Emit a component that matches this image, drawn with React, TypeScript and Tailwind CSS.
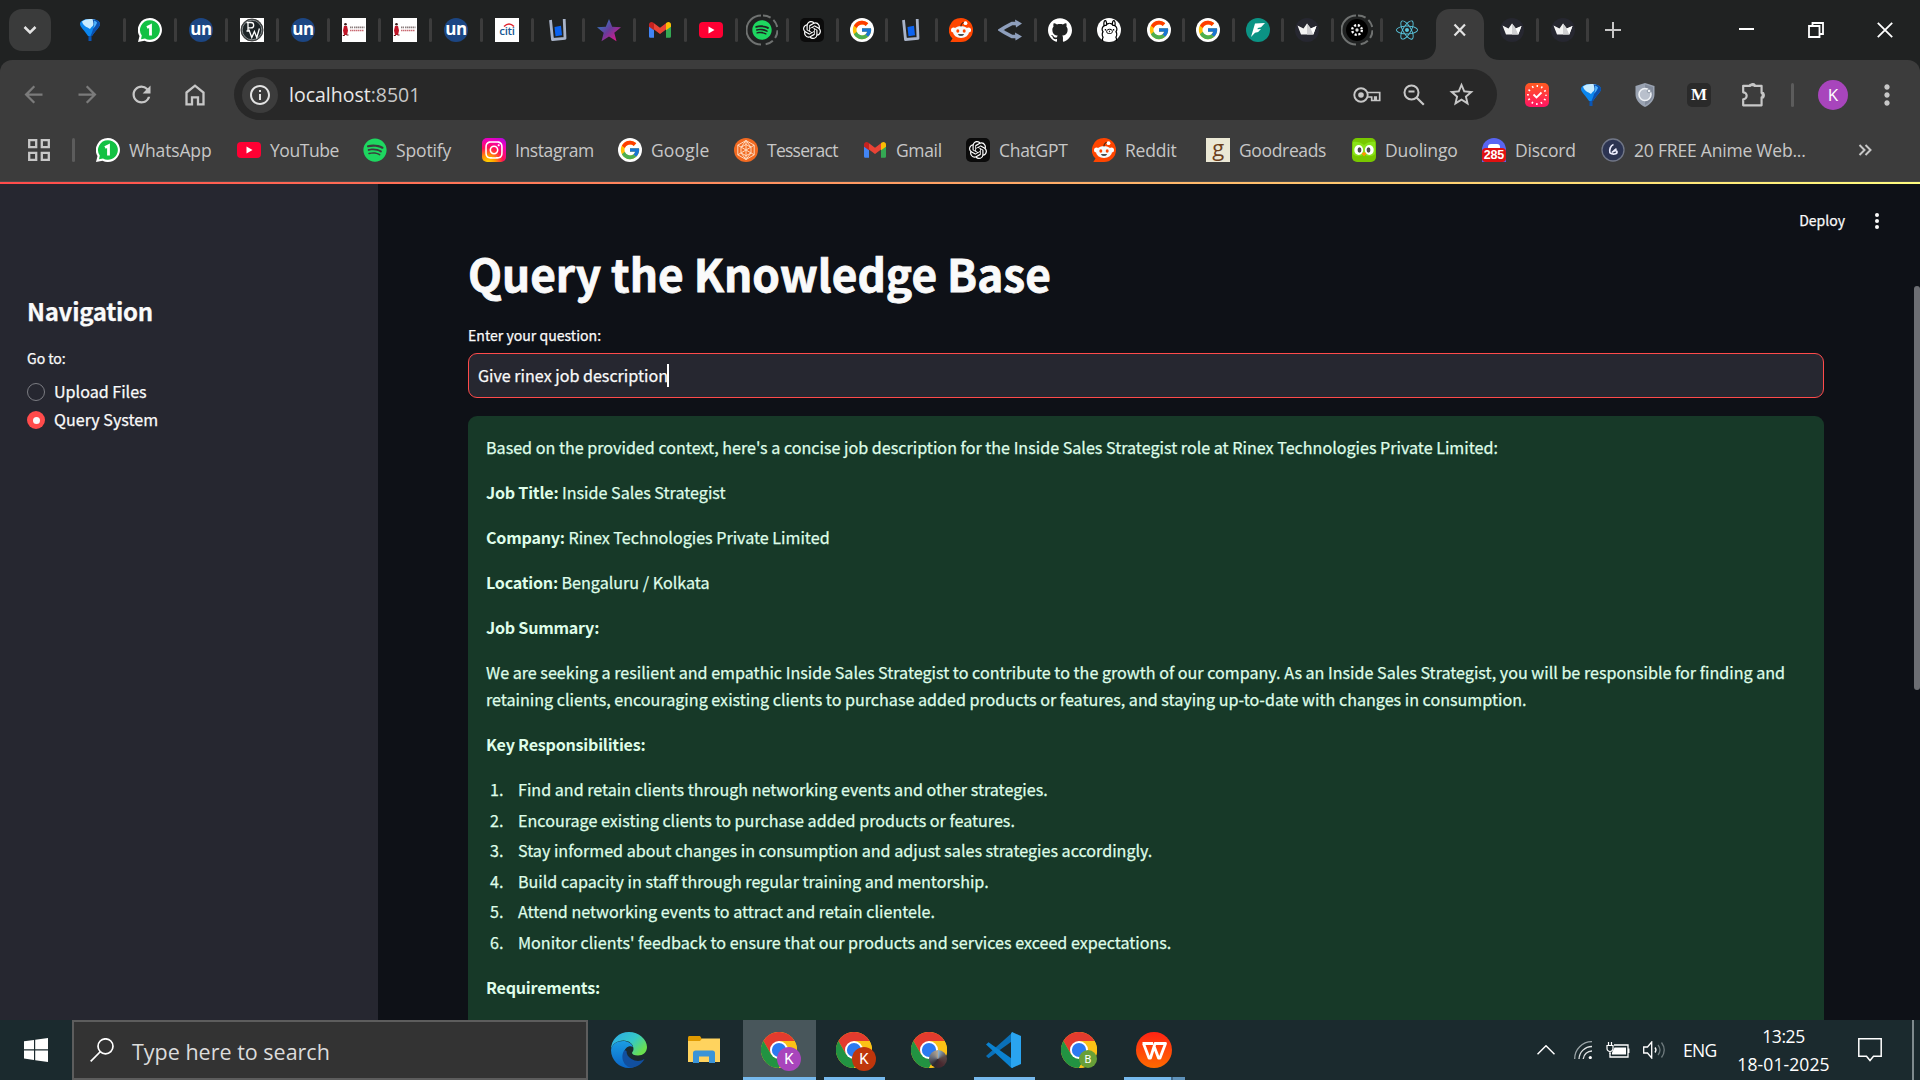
import type { ReactNode } from "react";
import { FaSpotify, FaReact, FaInstagram } from "react-icons/fa";
import { FcGoogle } from "react-icons/fc";
import { SiOpenai, SiGithub, SiOllama } from "react-icons/si";
import {
  MdArrowBack,
  MdArrowForward,
  MdRefresh,
  MdInfoOutline,
  MdStarOutline,
  MdMoreVert,
} from "react-icons/md";

/* ---------- favicons ---------- */

const Balloon = () => (
  <svg viewBox="0 0 24 24" className="size-6">
    <path d="M2 6C2 3 6 1 12 1s10 2 10 5c0 3-5 7-8 12h-4C7 13 2 9 2 6z" fill="#0b86ee" />
    <path d="M4 3.500C6 1.800 9 1 12 1s4 .300 6 1.200C17 7 14 8 12 11 9 9 5 8 4 3.500z" fill="#c8ecff" />
    <path d="M14.500 1.300c4 .500 7.500 2.200 7.500 4.700 0 3-5 7-8 12h-1.500c3-6 4-11 2-16.700z" fill="#0b4fae" />
    <path d="M16 2.500c1.500.600 2.500 1.200 3 2.200-1 3-3 5-4 6 1-3 1.500-5.500 1-8.200z" fill="#4db4ff" />
    <path d="M10.500 18h3v5h-3z" fill="#0a55b4" />
  </svg>
);

const WhatsAppBadge = () => (
  <svg viewBox="0 0 24 24" className="size-6">
    <path d="M12 0a12 12 0 1 1-5.500 22.700L0 24l1.500-6A12 12 0 0 1 12 0z" fill="#fff" />
    <path d="M12 2.200a9.800 9.800 0 1 1-5 18.200L3 21.200l.8-3.600A9.800 9.800 0 0 1 12 2.200z" fill="#12c143" />
    <path d="M9 9.400l3.500-1.700V17.500" fill="none" stroke="#fff" strokeWidth="2.800" />
  </svg>
);

const Un = () => (
  <div className="flex size-6 items-center justify-center rounded-full bg-[#1c4683] pb-1 font-['Open_Sans',sans-serif] text-[17px] leading-none font-bold tracking-[-0.5px] text-white">
    un
  </div>
);

const Pw = () => (
  <div className="flex size-6 items-center justify-center bg-white">
    <svg viewBox="0 0 24 24" className="size-6">
      <circle cx="12" cy="12" r="11" fill="#1d2427" stroke="#444" />
      <circle cx="12" cy="12" r="9.800" fill="none" stroke="#cfd3d4" strokeWidth=".6" />
      <path d="M6.500 4.500H11a2.700 2.700 0 0 1 0 5.400H8.300M8 4.500V13M6.500 13h3.200" fill="none" stroke="#fff" strokeWidth="1.300" />
      <path d="M8.800 11.500l3 8 2.600-6 2.400 6 2.600-9" fill="none" stroke="#fff" strokeWidth="1.300" />
    </svg>
  </div>
);

const Cap = () => (
  <div className="size-6 bg-white">
    <svg viewBox="0 0 24 24" className="size-6">
      <circle cx="3.500" cy="6.300" r="1.300" fill="#3b1d1d" />
      <path d="M2 8h3l1 4.500-1 4.500H2L1 12.500z" fill="#c01527" />
      <path d="M.8 17.500h2M4.500 17h2" stroke="#5a1010" />
      <path d="M8 9.300h3M12 9.300h10.500" stroke="#8b7d7d" strokeWidth="1.700" strokeDasharray="1.500 .5" />
      <path d="M8 12.500h14" stroke="#c96a72" strokeWidth="1.400" strokeDasharray="1.500 .5" />
    </svg>
  </div>
);

const Citi = () => (
  <div className="relative flex size-6 items-center justify-center bg-white pt-0.5 font-['Open_Sans',sans-serif] text-[11.500px] leading-none font-semibold tracking-[-0.3px] text-[#1a5a94]">
    citi
    <svg viewBox="0 0 24 24" className="absolute inset-0 size-6">
      <path d="M9 8.500Q14 3.500 19 8.500" fill="none" stroke="#e0252f" strokeWidth="1.500" />
    </svg>
  </div>
);

const Cup = () => (
  <svg viewBox="0 0 24 24" className="size-6">
    <path d="M4.500 2l2 19.500L19 20.300 18.200 1" fill="none" stroke="#a9b4c9" strokeWidth="2.800" strokeLinejoin="round" />
    <path d="M8.500 9l6.500-1.200 1 9.500-6.500 1z" fill="#0b63f0" />
  </svg>
);

const Star = () => (
  <svg viewBox="0 0 24 24" className="size-6">
    <defs>
      <linearGradient id="starFill" x1="0" y1="0" x2="1" y2="1">
        <stop offset="0.100" stopColor="#2f7fc5" />
        <stop offset=".5" stopColor="#6a3a9a" />
        <stop offset=".9" stopColor="#e0178c" />
      </linearGradient>
    </defs>
    <path d="M12 1l3.200 7.800L24 9.300l-6.700 5.400 2.200 8.500L12 18.600 4.500 23.200l2.200-8.500L0 9.300l8.800-.5z" fill="url(#starFill)" />
  </svg>
);

const Gmail = () => (
  <svg viewBox="0 0 24 24" className="size-6">
    <path d="M1 6v12.200c0 .9.700 1.600 1.600 1.600H6V10z" fill="#4285f4" />
    <path d="M23 6v12.200c0 .9-.7 1.600-1.600 1.600H18V10z" fill="#34a853" />
    <path d="M6 5.200l6 4.600 6-4.600v6.200l-6 4.600-6-4.600z" fill="#ea4335" />
    <path d="M1 6.500v2.200l5 3.600V5.200l-.8-.6C3.400 3.300 1 4.500 1 6.500z" fill="#c5221f" />
    <path d="M23 6.500v2.200l-5 3.600V5.200l.8-.6C20.600 3.300 23 4.500 23 6.500z" fill="#fbbc04" />
  </svg>
);

const YouTube = () => (
  <svg viewBox="0 0 24 24" className="size-6">
    <rect y="4" width="24" height="16" rx="4" fill="#ff0033" />
    <path d="M9.500 8.600l6 3.400-6 3.400z" fill="#fff" />
  </svg>
);

const Ringed = ({ children }: { children: ReactNode }) => (
  <div className="relative flex size-6 items-center justify-center">
    <svg viewBox="0 0 32 32" className="absolute -inset-1 size-8">
      <path d="M15 1.500A14.500 14.500 0 0 0 15 30.500" fill="none" stroke="#6f7271" strokeWidth="2" />
      <path d="M17 1.500A14.500 14.500 0 0 1 17 30.500" fill="none" stroke="#6f7271" strokeWidth="2" strokeDasharray="8 3.500" />
    </svg>
    {children}
  </div>
);

const Spotify = () => <FaSpotify className="size-6 text-[#1ed760]" />;

const SpotifyTab = () => (
  <Ringed>
    <FaSpotify className="size-5 text-[#1ed760]" />
  </Ringed>
);

const ChatGpt = () => (
  <div className="flex size-6 items-center justify-center rounded-[5px] bg-[#0b0b0b]">
    <SiOpenai className="size-[18px] text-white" />
  </div>
);

const Google = () => (
  <div className="flex size-6 items-center justify-center rounded-full bg-white">
    <FcGoogle className="size-[22px]" />
  </div>
);

const Reddit = () => (
  <svg viewBox="0 0 24 24" className="size-6">
    <path d="M12 0a12 12 0 1 1 0 24H1.300l2.200-3.500A12 12 0 0 1 12 0z" fill="#ff4500" />
    <circle cx="4.500" cy="12" r="2.500" fill="#fff" />
    <circle cx="19.500" cy="12" r="2.500" fill="#fff" />
    <ellipse cx="12" cy="14" rx="8" ry="6" fill="#f4f9fc" />
    <path d="M12 8.500c0-3 1.500-4.500 4-3.500" fill="none" stroke="#0b1416" strokeWidth="1" />
    <circle cx="16.500" cy="5.200" r="1.900" fill="#fff" />
    <ellipse cx="8.800" cy="13" rx="1.500" ry="1.800" fill="#ff4500" />
    <ellipse cx="15.200" cy="13" rx="1.500" ry="1.800" fill="#ff4500" />
    <path d="M8.800 16.200h6.400a3.400 2.400 0 0 1-6.400 0z" fill="#0b1416" />
  </svg>
);

const Fork = () => (
  <svg viewBox="0 0 24 24" className="size-6">
    <path d="M18 5.500h-4L6.500 9.500 2.500 12l4 2.500L14 18.500h4" fill="none" stroke="#8e9fbc" strokeWidth="3.600" />
    <path d="M17 1.500L24 5.500l-6 4zM17 14.500l7 4-6.500 4z" fill="#8e9fbc" />
  </svg>
);

const Github = () => <SiGithub className="size-6 text-white" />;

const Ollama = () => (
  <div className="flex size-6 items-center justify-center rounded-full bg-white">
    <SiOllama className="size-[21px] text-black" />
  </div>
);

const Feather = () => (
  <div className="size-6 rounded-full bg-[#0b9384]">
    <svg viewBox="0 0 24 24" className="size-6">
      <path d="M9 5.500L19 5l-4 4.200-3.200.8-.3 1.300 3.500-.3-2.800 3-3.200.8L5 19z" fill="#fff" />
    </svg>
  </div>
);

const Crown = () => (
  <div className="size-6 rounded-full bg-[#262730]">
    <svg viewBox="0 0 24 24" className="size-6">
      <path d="M2.500 7.500l6 3L12 5.500l3.800 5L21.500 8l-3.200 8.500H6z" fill="#f4f4f4" />
      <path d="M12 5.500l3.800 5 2.500 6H12z" fill="#cfcfd2" />
      <path d="M15.800 10.500L21.500 8l-3.200 8.500z" fill="#fff" />
    </svg>
  </div>
);

const Cluster = () => (
  <Ringed>
    <div className="flex size-[22px] items-center justify-center rounded-full bg-black">
      <svg viewBox="0 0 24 24" className="size-5">
        <circle cx="12" cy="12" r="5.800" fill="none" stroke="#fff" strokeWidth="2.800" strokeDasharray="2.600 2" />
        <circle cx="12" cy="12" r="2" fill="#ddd" />
      </svg>
    </div>
  </Ringed>
);

const ReactLogo = () => <FaReact className="size-[22px] text-[#58c4dc]" />;

const Instagram = () => (
  <div className="flex size-6 items-center justify-center rounded-[5px] bg-[radial-gradient(circle_at_25%_105%,#ffdd00_0%,#ff9500_25%,#ff1055_50%,#f400b8_75%,#7b10ff_110%)]">
    <FaInstagram className="size-5 text-white" />
  </div>
);

const Tesseract = () => (
  <svg viewBox="0 0 24 24" className="size-6">
    <circle cx="12" cy="12" r="12" fill="#f26a21" />
    <g fill="none" stroke="#ffd9bd" strokeWidth="1">
      <path d="M12 2.500l8.200 4.700v9.600L12 21.500l-8.200-4.700V7.200z" />
      <path d="M12 6.500l5 2.800v5.600l-5 2.800-5-2.800V9.300z" />
      <path d="M12 2.500v19M3.800 7.200l16.400 9.600M20.200 7.200L3.800 16.800M7 9.300L12 2.500l5 6.800M7 14.900l5 6.600 5-6.600" />
    </g>
  </svg>
);

const Goodreads = () => (
  <div className="flex size-6 items-center justify-center bg-[#ebe8d5] pb-1.5 font-['Open_Sans',sans-serif] text-[22px] leading-none text-[#6b3f1d]">
    g
  </div>
);

const Duolingo = () => (
  <svg viewBox="0 0 24 24" className="size-6">
    <rect width="24" height="24" rx="5" fill="#78c800" />
    <path d="M1 4c3-1 8 0 11 3 3-3 8-4 11-3v12c-3 3-8 3-11 0-3 3-8 3-11 0z" fill="#89e219" />
    <ellipse cx="6.700" cy="12" rx="4.400" ry="5" fill="#fff" />
    <ellipse cx="17.300" cy="12" rx="4.400" ry="5" fill="#fff" />
    <ellipse cx="7.500" cy="12" rx="1.900" ry="2.700" fill="#4b4b4b" />
    <ellipse cx="16.500" cy="12" rx="1.900" ry="2.700" fill="#4b4b4b" />
    <path d="M9.500 15.500L12 14l2.500 1.500L12 18.500z" fill="#ff9600" />
  </svg>
);

const Discord = () => (
  <div className="flex size-6 flex-col items-center justify-end overflow-hidden rounded-full rounded-b-[5px] bg-[#5865f2]">
    <div className="h-1 w-3 rounded-t-[3px] bg-white" />
    <div className="flex h-3.5 w-6 items-center justify-center rounded-[4px] bg-[#e01010] font-['Liberation_Sans',sans-serif] text-[12.500px] leading-none font-bold text-white">
      285
    </div>
  </div>
);

const Anime = () => (
  <svg viewBox="0 0 24 24" className="size-6">
    <circle cx="12" cy="12" r="11" fill="#2c3452" stroke="#717787" strokeWidth="1.300" />
    <path d="M12.500 6.500c-3 1-4.500 5-3.500 8.500M9 15c2.500 1.500 7 1.500 7-1 0-2-3-1.500-5 .5 2-2 3-3 4.500-3.800" fill="none" stroke="#eef" strokeWidth="1.700" />
  </svg>
);

/* ---------- browser chrome ---------- */

const wideTabs = [Un, Pw, Un, Cap, Cap, Un, Citi, Cup, Star, Gmail, YouTube, SpotifyTab];
const narrowTabs = [ChatGpt, Google, Cup, Reddit, Fork, Github, Ollama, Google, Google, Feather, Crown, Cluster];

const Divider = () => <div className="h-6 w-[3px] shrink-0 rounded-sm bg-[#3c3c3c]" />;

function TabStrip() {
  return (
    <div className="flex h-[60px] items-center bg-[#202222]">
      <div className="ml-[9px] flex size-[42px] items-center justify-center rounded-[13px] bg-[#3a3b3b]">
        <svg viewBox="0 0 14 10" className="h-[10px] w-[14px]">
          <path d="M1.500 2L7 7.500 12.500 2" fill="none" stroke="#e3e3e3" strokeWidth="2.500" />
        </svg>
      </div>
      <div className="ml-[6px] flex w-[66px] justify-center">
        <Balloon />
      </div>
      <Divider />
      <div className="flex w-12 justify-center">
        <WhatsAppBadge />
      </div>
      <Divider />
      {wideTabs.map((Icon, i) => (
        <div key={i} className="flex shrink-0 items-center">
          <div className="flex w-12 justify-center">
            <Icon />
          </div>
          <Divider />
        </div>
      ))}
      {narrowTabs.map((Icon, i) => (
        <div key={i} className="flex shrink-0 items-center">
          <div className="flex w-[46.500px] justify-center">
            <Icon />
          </div>
          <Divider />
        </div>
      ))}
      <div className="flex w-[48px] justify-center">
        <ReactLogo />
      </div>
      <div className="-ml-[11px] flex h-[60px] items-end">
        <svg viewBox="0 0 80 51" className="h-[51px] w-[80px]">
          <path d="M0 51C10 51 16 45 16 36V14C16 6 22 0 30 0H50C58 0 64 6 64 14V36C64 45 70 51 80 51z" fill="#3c3c3c" />
          <path d="M34.500 15.500l10.500 11M45 15.500l-10.500 11" stroke="#e3e3e3" strokeWidth="2.200" />
        </svg>
      </div>
      <div className="-ml-[12px] flex w-[48px] justify-center">
        <Crown />
      </div>
      <Divider />
      <div className="flex w-[47px] justify-center">
        <Crown />
      </div>
      <Divider />
      <svg viewBox="0 0 16 16" className="ml-4 size-4">
        <path d="M8 0v16M0 8h16" stroke="#c7c7c7" strokeWidth="2" />
      </svg>
      <div className="ml-auto flex items-center text-white">
        <div className="flex w-[70px] justify-center pb-0.5">
          <div className="h-0.5 w-[15px] bg-white" />
        </div>
        <div className="flex w-[69px] justify-center">
          <svg viewBox="0 0 16 16" className="size-4">
            <path d="M1 4h10.500v11H1zM4.500 4V1H15v11h-3.500" fill="none" stroke="#fff" strokeWidth="1.800" />
          </svg>
        </div>
        <div className="flex w-[70px] justify-center">
          <svg viewBox="0 0 16 16" className="size-4">
            <path d="M.8.8l14.400 14.400M15.200.8L.8 15.200" stroke="#fff" strokeWidth="1.800" />
          </svg>
        </div>
      </div>
    </div>
  );
}

function Toolbar() {
  return (
    <div className="bg-[#202222]">
      <div className="flex h-[69px] items-center rounded-t-[12px] bg-[#3c3c3c]">
        <div className="flex items-center pl-[6px] text-[#c7c7c7]">
          <div className="flex w-[54px] justify-center text-[#7b7b7b]">
            <MdArrowBack className="size-[27px]" />
          </div>
          <div className="flex w-[54px] justify-center text-[#7b7b7b]">
            <MdArrowForward className="size-[27px]" />
          </div>
          <div className="flex w-[54px] justify-center">
            <MdRefresh className="size-[27px]" />
          </div>
          <div className="flex w-[54px] justify-center">
            <svg viewBox="0 0 20 22" className="h-[22px] w-5">
              <path d="M1.500 8.500L10 1.700l8.500 6.800v11.800h-5.500v-7H7v7H1.500z" fill="none" stroke="#c7c7c7" strokeWidth="2.300" />
            </svg>
          </div>
        </div>
        <div className="ml-[12px] flex h-[51px] w-[1263px] items-center rounded-full bg-[#282828] pl-2">
          <div className="flex size-9 items-center justify-center rounded-full bg-[#3c3c3c]">
            <MdInfoOutline className="size-6 text-[#e3e3e3]" />
          </div>
          <div className="ml-[11px] font-['Open_Sans',sans-serif] text-[19.500px] leading-6 text-[#e8e8e8]">
            localhost<span className="text-[#c7c7c7]">:8501</span>
          </div>
          <div className="ml-auto flex items-center pr-[21px]">
            <svg viewBox="0 0 28 16" className="h-4 w-7">
              <circle cx="8" cy="8" r="6.700" fill="none" stroke="#c7c7c7" strokeWidth="1.900" />
              <circle cx="8" cy="8" r="2.800" fill="#c7c7c7" />
              <path d="M14 5.500h12.700v8h-3.500V10h-1.500v3.500h-3V10H14" fill="none" stroke="#c7c7c7" strokeWidth="1.700" />
            </svg>
            <svg viewBox="0 0 22 22" className="ml-[22px] size-[22px]">
              <circle cx="8.500" cy="8.500" r="7" fill="none" stroke="#c7c7c7" strokeWidth="2" />
              <path d="M13.500 13.500l7.300 7.300M5.500 7.500h6" stroke="#c7c7c7" strokeWidth="2.200" />
            </svg>
            <MdStarOutline className="ml-[22px] size-[29px] text-[#c7c7c7]" />
          </div>
        </div>
        <div className="flex items-center pl-[13px]">
          <div className="flex w-[54px] justify-center">
            <svg viewBox="0 0 24 24" className="size-6">
              <defs>
                <linearGradient id="clockFill" x1="0" y1="0" x2="0" y2="1">
                  <stop offset="0" stopColor="#ff5a1f" />
                  <stop offset="1" stopColor="#ff1464" />
                </linearGradient>
              </defs>
              <rect width="24" height="24" rx="5" fill="url(#clockFill)" />
              <circle cx="12" cy="12" r="9" fill="none" stroke="#fff" strokeWidth="2" strokeDasharray="1.500 3.212" strokeDashoffset=".7" />
              <path d="M8.500 11.500l3 3 5-5" fill="none" stroke="#fff" strokeWidth="1.800" />
            </svg>
          </div>
          <div className="flex w-[54px] justify-center">
            <Balloon />
          </div>
          <div className="flex w-[54px] justify-center">
            <svg viewBox="0 0 24 24" className="size-6">
              <path d="M12 0l9.500 3v8c0 6-4 10.500-9.500 13C6.500 21.500 2.500 17 2.500 11V3z" fill="#9aa3b2" />
              <path d="M12 1.500V22.300c4.500-2.300 8-6 8-11.300V4z" fill="#828b9b" />
              <circle cx="12" cy="11.500" r="6" fill="#b9c0cc" stroke="#eef1f5" strokeWidth="1.600" />
              <circle cx="16" cy="8" r="1.800" fill="#eef1f5" stroke="#828b9b" strokeWidth=".8" />
            </svg>
          </div>
          <div className="flex w-[54px] justify-center">
            <div className="flex size-6 items-center justify-center rounded-[5px] bg-[#2a2a2a] font-['Liberation_Serif',serif] text-[17px] leading-none font-bold text-white">
              M
            </div>
          </div>
          <div className="flex w-[56px] justify-center">
            <svg viewBox="0 0 24 24" className="size-[26px]">
              <path d="M2 3.500h6.500v-1h3.800v1H19v6.700h1.500v4H19v7.300H2v-5.500a3.200 3.200 0 0 0 0-6.500z" fill="none" stroke="#c7c7c7" strokeWidth="2" strokeLinejoin="round" />
              <path d="M9 3.500a2 2 0 0 1 4 0zM19.500 10.300a2 2 0 0 1 0 4z" fill="#c7c7c7" stroke="#c7c7c7" />
            </svg>
          </div>
          <div className="ml-[9px] h-6 w-[3px] rounded-sm bg-[#5c5c5c]" />
          <div className="ml-[24px] flex size-[30px] items-center justify-center rounded-full bg-[#a845bc] font-['Open_Sans',sans-serif] text-[17px] leading-none text-white">
            K
          </div>
          <MdMoreVert className="ml-[23px] size-[32px] text-[#c7c7c7]" />
        </div>
      </div>
    </div>
  );
}

function Bookmark({ icon, label, className }: { icon: ReactNode; label: string; className: string }) {
  return (
    <div className={`flex shrink-0 items-center gap-[9px] whitespace-nowrap ${className}`}>
      {icon}
      <span>{label}</span>
    </div>
  );
}

function BookmarkBar() {
  return (
    <div className="flex h-[53px] items-center border-b border-[#4a4a4a] bg-[#3c3c3c] pb-[10px] font-['Open_Sans',sans-serif] text-[17.500px] leading-6 text-[#c7c7c7]">
      <svg viewBox="0 0 22 22" className="ml-7 size-[22px]">
        <path d="M1.200 1.200h7v7h-7zM13.800 1.200h7v7h-7zM1.200 13.800h7v7h-7zM13.800 13.800h7v7h-7z" fill="none" stroke="#c7c7c7" strokeWidth="2.300" />
      </svg>
      <div className="mr-[21px] ml-[22px] h-6 w-[3px] rounded-sm bg-[#5c5c5c]" />
      <Bookmark icon={<WhatsAppBadge />} label="WhatsApp" className="w-[141px] tracking-[-0.15px]" />
      <Bookmark icon={<YouTube />} label="YouTube" className="w-[126px] tracking-[-0.45px]" />
      <Bookmark icon={<Spotify />} label="Spotify" className="w-[119px] tracking-[-0.15px]" />
      <Bookmark icon={<Instagram />} label="Instagram" className="w-[136px] tracking-[-0.4px]" />
      <Bookmark icon={<Google />} label="Google" className="w-[116px] tracking-[0.15px]" />
      <Bookmark icon={<Tesseract />} label="Tesseract" className="w-[129px] tracking-[-0.75px]" />
      <Bookmark icon={<Gmail />} label="Gmail" className="w-[103px] tracking-[-0.35px]" />
      <Bookmark icon={<ChatGpt />} label="ChatGPT" className="w-[126px] tracking-[-0.3px]" />
      <Bookmark icon={<Reddit />} label="Reddit" className="w-[114px] tracking-[-0.2px]" />
      <Bookmark icon={<Goodreads />} label="Goodreads" className="w-[146px] tracking-[-0.35px]" />
      <Bookmark icon={<Duolingo />} label="Duolingo" className="w-[130px] tracking-[-0.1px]" />
      <Bookmark icon={<Discord />} label="Discord" className="w-[119px] tracking-[-0.2px]" />
      <Bookmark icon={<Anime />} label="20 FREE Anime Web..." className="w-[257px] tracking-[-0.2px]" />
      <svg viewBox="0 0 14 12" className="h-3 w-[14px]">
        <path d="M1.500 1l5 5-5 5M7.500 1l5 5-5 5" fill="none" stroke="#c7c7c7" strokeWidth="2" />
      </svg>
    </div>
  );
}

/* ---------- page ---------- */

function Sidebar() {
  return (
    <aside className="w-[378px] shrink-0 bg-[#262730] px-[27px] pt-[111px]">
      <h2 className="text-[24px] leading-8 font-bold tracking-[-0.28px]">Navigation</h2>
      <div className="mt-[19px] text-[14px] leading-6">Go to:</div>
      <div className="mt-2 flex flex-col">
        <label className="flex h-7 items-center gap-[9px]">
          <span className="size-[18px] rounded-full border border-[#7b7c82]" />
          <span className="-mt-[3px] text-[16.100px] leading-6">Upload Files</span>
        </label>
        <label className="flex h-7 items-center gap-[9px]">
          <span className="flex size-[18px] items-center justify-center rounded-full bg-[#ff4b4b]">
            <span className="size-[7px] rounded-full bg-[#fafafa]" />
          </span>
          <span className="-mt-[3px] text-[16.100px] leading-6">Query System</span>
        </label>
      </div>
    </aside>
  );
}

const responsibilities = [
  "Find and retain clients through networking events and other strategies.",
  "Encourage existing clients to purchase added products or features.",
  "Stay informed about changes in consumption and adjust sales strategies accordingly.",
  "Build capacity in staff through regular training and mentorship.",
  "Attend networking events to attract and retain clientele.",
  "Monitor clients' feedback to ensure that our products and services exceed expectations.",
];

const B = ({ children }: { children: ReactNode }) => (
  <strong className="font-bold tracking-[-0.23px] [-webkit-text-stroke:0px]">{children}</strong>
);

function Main() {
  return (
    <main className="flex min-w-0 flex-1 flex-col bg-[#0e1117]">
      <div className="h-[59px] shrink-0">
        <div className="flex items-center justify-end pt-[26px] pr-[32px]">
          <span className="-mt-[2px] text-[14px] leading-6">Deploy</span>
          <svg viewBox="0 0 4 16" className="mr-[9px] ml-[30px] h-4 w-1">
            <circle cx="2" cy="2" r="2" fill="#fafafa" />
            <circle cx="2" cy="8" r="2" fill="#fafafa" />
            <circle cx="2" cy="14" r="2" fill="#fafafa" />
          </svg>
        </div>
      </div>
      <div className="flex min-h-0 flex-1">
        <div className="mr-[90px] ml-[90px] flex min-w-0 flex-1 flex-col">
          <h1 className="text-[44.200px] leading-[60px] font-bold [-webkit-text-stroke:0.8px_#fafafa]">
            Query the Knowledge Base
          </h1>
          <div className="mt-5 text-[14.100px] leading-6">Enter your question:</div>
          <div className="mt-[6px] flex h-[45px] shrink-0 items-center rounded-[9px] border border-[#ff4b4b] bg-[#262730] pl-[9px]">
            <span className="-mt-px text-[16.100px] leading-6">Give rinex job description</span>
            <span className="-ml-px h-[23px] w-0.5 bg-white" />
          </div>
          <div className="mt-[18px] flex min-h-0 flex-1 flex-col gap-[18px] overflow-hidden rounded-t-[9px] bg-[#173928] px-[18px] pt-[18px] text-[16.120px] leading-[27px] whitespace-nowrap text-[#dffde9]">
            <p>
              Based on the provided context, here's a concise job description for the Inside Sales Strategist role at
              Rinex Technologies Private Limited:
            </p>
            <p>
              <B>Job Title:</B> Inside Sales Strategist
            </p>
            <p>
              <B>Company:</B> Rinex Technologies Private Limited
            </p>
            <p>
              <B>Location:</B> Bengaluru / Kolkata
            </p>
            <p>
              <B>Job Summary:</B>
            </p>
            <p>
              We are seeking a resilient and empathic Inside Sales Strategist to contribute to the growth of our
              company. As an Inside Sales Strategist, you will be responsible for finding and
              <br />
              retaining clients, encouraging existing clients to purchase added products or features, and staying
              up-to-date with changes in consumption.
            </p>
            <p>
              <B>Key Responsibilities:</B>
            </p>
            <ol className="flex flex-col gap-[3.600px]">
              {responsibilities.map((text, i) => (
                <li key={text} className="flex">
                  <span className="w-8 shrink-0 pl-1">{i + 1}.</span>
                  {text}
                </li>
              ))}
            </ol>
            <p>
              <B>Requirements:</B>
            </p>
          </div>
        </div>
        <div className="w-[6px] shrink-0 pt-[43px]">
          <div className="h-[404px] rounded-full bg-[#6c6e73]" />
        </div>
      </div>
    </main>
  );
}

/* ---------- taskbar ---------- */

const ChromeLogo = () => (
  <svg viewBox="0 0 36 36" className="size-9">
    <circle cx="18" cy="18" r="18" fill="#fbc116" />
    <path d="M2.400 9A18 18 0 0 1 33.600 9H18l-7.800 13.500z" fill="#e33b2e" />
    <path d="M2.400 9A18 18 0 0 0 18 36l7.800-13.500H10.200z" fill="#229342" />
    <path d="M33.600 9A18 18 0 0 1 18 36l7.800-13.500A9 9 0 0 0 18 9z" fill="#fbc116" />
    <circle cx="18" cy="18" r="9" fill="#fff" />
    <circle cx="18" cy="18" r="7.100" fill="#2b7af0" />
  </svg>
);

const Edge = () => (
  <svg viewBox="0 0 36 36" className="size-9">
    <defs>
      <linearGradient id="edgeTop" x1="0" y1="0" x2="1" y2=".6">
        <stop offset="0" stopColor="#2ba8ea" />
        <stop offset=".6" stopColor="#35c8c8" />
        <stop offset="1" stopColor="#6ae04f" />
      </linearGradient>
      <linearGradient id="edgeLeft" x1="0" y1="0" x2="0" y2="1">
        <stop offset="0" stopColor="#1b9de2" />
        <stop offset="1" stopColor="#0b66c8" />
      </linearGradient>
    </defs>
    <path d="M0 18C0 7 8 0 18 0s18 7.500 18 15c0 5-4 8.500-9 8.500-4 0-6-1.500-6-2.500s1.500-1.500 1.500-4C22.500 12 18 8.500 12.500 8.500 6 8.500 1 12 0 18z" fill="url(#edgeTop)" />
    <path d="M0 18C1 12 6 9 12 9c5 0 9 2.500 10 6-3-2-9 0-9 7 0 8 7 13 15 9.500C25 34.500 21.500 36 18 36 8 36 0 28 0 18z" fill="url(#edgeLeft)" />
    <path d="M13.500 18c-5 7-.5 17 7 17.700C26 35 31 32 33.500 27c-4 2.500-9 2.500-13 0-3.500-2-5-5-5-8z" fill="#114f9e" />
  </svg>
);

const Explorer = () => (
  <svg viewBox="0 0 32 28" className="h-7 w-8">
    <path d="M0 1.500C0 .7.700 0 1.500 0H12l2 3v3H0z" fill="#e09a00" />
    <path d="M0 5h12l2-2.500h18V26H0z" fill="#ffd35e" />
    <path d="M5 27V17c0-1.500 1-2.500 2.500-2.500h17c1.500 0 2.500 1 2.500 2.500v10h-6v-6.500H11V27z" fill="#3a94d8" />
  </svg>
);

const VsCode = () => (
  <svg viewBox="0 0 36 36" className="size-9">
    <path d="M0 24l2.500 2.300L27 8.500V0L5 19.500z" fill="#0a70b8" />
    <path d="M2.500 10.200L27 27.500V36h-1.500L0 12.500z" fill="#0b82d0" />
    <path d="M26 0l9 4v28l-9 4-1-1.500V1.500z" fill="#2aa4f0" />
  </svg>
);

const Wps = () => (
  <svg viewBox="0 0 36 36" className="size-9">
    <defs>
      <linearGradient id="wpsFill" x1="0" y1="0" x2="0" y2="1">
        <stop offset="0" stopColor="#ff2314" />
        <stop offset="1" stopColor="#ff6a00" />
      </linearGradient>
    </defs>
    <circle cx="18" cy="18" r="18" fill="url(#wpsFill)" />
    <path d="M6.500 11.500h10.500M7.500 11.500l5.500 14.500h1.500l4.500-14.500h10.500l-5.500 14.500h-1.500l-4.500-12" fill="none" stroke="#fff" strokeWidth="2.800" strokeLinejoin="round" />
  </svg>
);

function TaskItem({ children, active, open }: { children: ReactNode; active?: boolean; open?: boolean }) {
  return (
    <div className="flex w-[75px] shrink-0 justify-center">
      <div className={`flex h-[60px] w-[73px] flex-col items-center ${active ? "bg-[#48565b]" : ""}`}>
        <div className="relative flex h-[57px] items-center pt-[3px]">{children}</div>
        <div className={`h-[3px] ${active ? "w-full" : "w-[61px]"} ${active || open ? "bg-[#76b9ed]" : ""}`} />
      </div>
    </div>
  );
}

function Badge({ label, className }: { label: string; className: string }) {
  return (
    <span
      className={`absolute flex items-center justify-center rounded-full font-['Roboto',sans-serif] leading-none text-white ${className}`}
    >
      {label}
    </span>
  );
}

function Taskbar() {
  return (
    <div className="flex h-[60px] shrink-0 items-center bg-[#1b2a2e] font-['Open_Sans',sans-serif] text-white">
      <div className="flex w-[72px] justify-center">
        <svg viewBox="0 0 24 24" className="size-6">
          <path d="M0 3.300L10 2v9.300H0zM11.200 1.800L24 0v11.300H11.200zM0 12.600h10v9.300L0 20.600zM11.200 12.600H24V24l-12.800-1.800z" fill="#fff" />
        </svg>
      </div>
      <div className="flex h-[60px] w-[516px] items-center border-2 border-[#5d5d5d] bg-[#333333] pl-4">
        <svg viewBox="0 0 24 24" className="size-6">
          <circle cx="15.500" cy="8.300" r="7.500" fill="none" stroke="#fff" strokeWidth="1.700" />
          <path d="M10.500 13.500L.7 23.300" stroke="#fff" strokeWidth="1.700" />
        </svg>
        <span className="mt-[3px] ml-[18px] text-[21.500px] leading-8 text-[#dcdcdc]">Type here to search</span>
      </div>
      <div className="ml-[3.500px] flex">
        <TaskItem>
          <Edge />
        </TaskItem>
        <TaskItem>
          <Explorer />
        </TaskItem>
        <TaskItem active>
          <ChromeLogo />
          <Badge label="K" className="top-[27px] left-[16px] size-6 bg-[#a845bc] text-[15px]" />
        </TaskItem>
        <TaskItem open>
          <ChromeLogo />
          <Badge label="K" className="top-[27px] left-[16px] size-6 bg-[#bf360c] text-[15px]" />
        </TaskItem>
        <TaskItem>
          <ChromeLogo />
          <Badge
            label=""
            className="top-[30px] left-[18px] size-[18px] bg-[conic-gradient(#8fb4cf,#5a4a48,#4a2a30,#2c2830,#6a6f7c,#b8a890)]"
          />
        </TaskItem>
        <TaskItem open>
          <VsCode />
        </TaskItem>
        <TaskItem>
          <ChromeLogo />
          <Badge label="B" className="top-[30px] left-[18px] size-[18px] bg-[#689f38] text-[11px]" />
        </TaskItem>
        <div className="flex w-[75px] flex-col items-center">
          <div className="flex h-[57px] items-center pt-[3px]">
            <Wps />
          </div>
          <div className="flex h-[3px] w-[61px]">
            <div className="w-[47px] bg-[#76b9ed]" />
            <div className="w-[2px] bg-[#42698a]" />
            <div className="flex-1 bg-[#5f92ba]" />
          </div>
        </div>
      </div>
      <div className="ml-auto flex h-[60px] items-center text-[17.500px] leading-7">
        <svg viewBox="0 0 18 10" className="mr-[19px] h-[10px] w-[18px]">
          <path d="M.5 9.300L9 .8l8.500 8.500" fill="none" stroke="#fff" strokeWidth="1.500" />
        </svg>
        <svg viewBox="0 0 18 18" className="mr-[14px] size-[18px]">
          <g fill="none" strokeWidth="1.300">
            <path d="M.7 18A17 17 0 0 1 18 .7" stroke="#9aa4a7" />
            <path d="M5 18A13 13 0 0 1 18 5.500" stroke="#e0e4e5" />
            <path d="M9.200 18A9 9 0 0 1 18 10" stroke="#e0e4e5" />
          </g>
          <circle cx="16.300" cy="16.500" r="1.600" fill="#fff" />
        </svg>
        <svg viewBox="0 0 24 16" className="mr-[13px] h-4 w-6">
          <path d="M8 3h14v12H4v-4M22.800 6.500v4.500" fill="none" stroke="#fff" strokeWidth="1.300" />
          <path d="M8.500 5.500H20v7H6v-2z" fill="#fff" />
          <path d="M1 3.500h6v3a3 3 0 0 1-6 0zM2.500 0v3M5.500 0v3M4 9.500V12" fill="#1b2a2e" stroke="#fff" strokeWidth="1.200" />
        </svg>
        <svg viewBox="0 0 22 18" className="mr-[18px] h-[18px] w-[22px]">
          <g fill="none" strokeWidth="1.300">
            <path d="M.7 6h3.800L8.700 1v16l-4.200-5H.7z" stroke="#fff" />
            <path d="M12 6.500q2 2.500 0 5" stroke="#fff" />
            <path d="M15 4q4 5 0 10M18.500 1.500q5.500 7.500 0 15" stroke="#6e7a7d" />
          </g>
        </svg>
        <span className="mr-[20px] w-[34px] tracking-[-0.65px]">ENG</span>
        <div className="mr-[28px] flex w-[93px] flex-col items-center">
          <span className="tracking-[-0.4px]">13:25</span>
          <span className="tracking-[0.1px] whitespace-nowrap">18-01-2025</span>
        </div>
        <svg viewBox="0 0 24 24" className="mr-[30px] size-6">
          <path d="M.8.800h22.400v17.400h-7.700L12 22.500l-3.500-4.300H.8z" fill="none" stroke="#fff" strokeWidth="1.500" />
        </svg>
        <div className="mr-[6px] h-full w-0.5 bg-[#7f8b8e]" />
      </div>
    </div>
  );
}

export default function App() {
  return (
    <div className="flex h-[1080px] w-[1920px] flex-col overflow-hidden bg-[#3c3c3c]">
      <TabStrip />
      <Toolbar />
      <BookmarkBar />
      <div className="h-0.5 shrink-0 bg-[linear-gradient(90deg,#ff4b4b,#fffd80)]" />
      <div className="flex min-h-0 flex-1 font-['Noto_Sans_CJK_SC',sans-serif] text-[#fafafa] [-webkit-text-stroke:0.25px]">
        <Sidebar />
        <Main />
      </div>
      <Taskbar />
    </div>
  );
}
